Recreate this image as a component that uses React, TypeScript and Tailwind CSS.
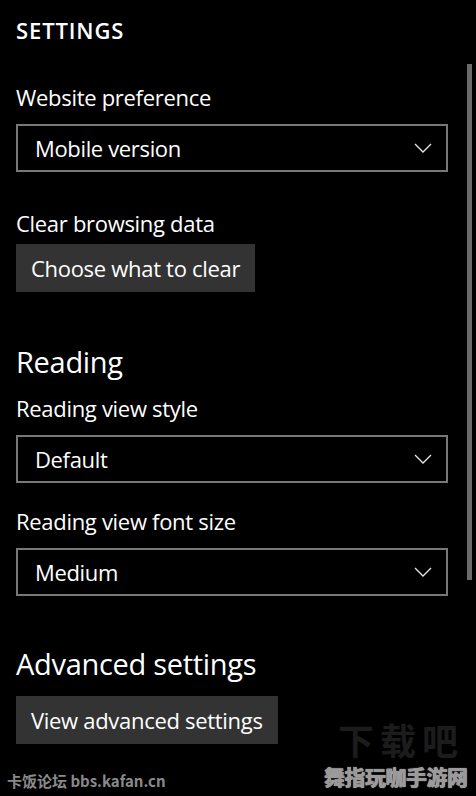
import React from "react";

const Chevron = () => (
  <svg width="18" height="10" viewBox="0 0 18 10" fill="none">
    <polyline points="1,1 9,9 17,1" stroke="#e6e6e6" strokeWidth="1.3" />
  </svg>
);

const Dropdown = ({ value }: { value: string }) => (
  <div className="flex items-center justify-between h-[48px] w-[432px] border-2 border-[#777777] pl-[17px] pr-[14px]">
    <span className="text-[22px] leading-[28px] tracking-[-0.35px]">{value}</span>
    <Chevron />
  </div>
);

const Label = ({ children, className = "" }: any) => (
  <p className={`text-[22px] leading-[28px] tracking-[-0.3px] ${className}`}>{children}</p>
);

const Button = ({ children, width }: any) => (
  <div className={`flex items-center h-[48px] bg-[#333333] px-[15px] ${width}`}>
    <span className="text-[22px] leading-[28px] tracking-[-0.3px] whitespace-nowrap">{children}</span>
  </div>
);

export default function App() {
  return (
    <div className="relative w-[476px] h-[796px] overflow-hidden bg-black text-white font-['Open_Sans',sans-serif]">
      <div className="flex">
        <div className="flex flex-col ml-4 w-[432px] pt-[16px]">
          <h1 className="text-[22px] leading-[28px] font-semibold tracking-[0.04em]">SETTINGS</h1>

          <Label className="mt-[39px]">Website preference</Label>
          <div className="mt-[13px]">
            <Dropdown value="Mobile version" />
          </div>

          <Label className="mt-[37px]">Clear browsing data</Label>
          <div className="mt-[7px]">
            <Button width="w-[239px]">Choose what to clear</Button>
          </div>

          <h2 className="mt-[52px] text-[29px] leading-[36px] tracking-[-0.3px]">Reading</h2>
          <Label className="mt-[14px]">Reading view style</Label>
          <div className="mt-[13px]">
            <Dropdown value="Default" />
          </div>

          <Label className="mt-[24px]">Reading view font size</Label>
          <div className="mt-[13px]">
            <Dropdown value="Medium" />
          </div>

          <h2 className="mt-[50px] text-[29px] leading-[36px] tracking-[-0.3px]">Advanced settings</h2>
          <div className="mt-[14px]">
            <Button width="w-[262px]">View advanced settings</Button>
          </div>
        </div>

        {/* scroll indicator */}
        <div className="ml-[19px] mt-[64px] w-[5px] h-[516px] bg-[#6b6b6b]" />
      </div>

      {/* watermarks */}
      <div className="absolute left-[338px] top-[722px] text-[36px] leading-[34px] font-bold tracking-[6px] text-[#1c1c1c] font-['Noto_Sans_CJK_SC',sans-serif]">
        下载吧
      </div>
      <div className="absolute left-[7px] top-[771px] text-[15px] leading-[20px] font-bold text-[#8a8a8a] font-['Noto_Sans_CJK_SC',sans-serif]">
        卡饭论坛 bbs.kafan.cn
      </div>
      <div className="absolute left-[324px] top-[766px] text-[21px] leading-[20px] font-black tracking-[-0.5px] text-[#9a9a9a] [text-shadow:0_0_1px_#e0e0e0] font-['Noto_Sans_CJK_SC',sans-serif]">
        舞指玩咖手游网
      </div>
    </div>
  );
}
